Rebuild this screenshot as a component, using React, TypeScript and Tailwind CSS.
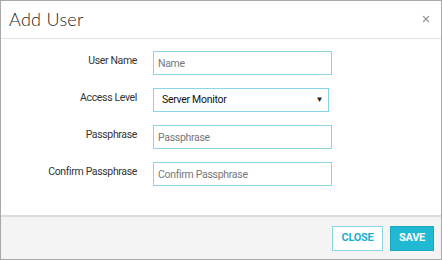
import { X } from "lucide-react"

const fields = [
  { label: "User Name", placeholder: "Name" },
  { label: "Access Level", select: "Server Monitor" },
  { label: "Passphrase", placeholder: "Passphrase" },
  { label: "Confirm Passphrase", placeholder: "Confirm Passphrase" },
]

export default function App() {
  return (
    <div className="w-[442px] h-[260px] bg-white border border-[#a8a8a8] flex flex-col font-['Roboto',Arial,sans-serif]">
      {/* header */}
      <div className="h-[38px] shrink-0 flex items-center justify-between pl-[8px] pr-[10px] border-b border-[#e3e3e3]">
        <h1 className="text-[18px] font-light text-[#222] font-['Lato',sans-serif] tracking-[0.3px]">Add User</h1>
        <X className="w-[10px] h-[10px] text-[#9a9a9a] -mt-[2px]" strokeWidth={3} />
      </div>

      {/* body */}
      <div className="flex-1 flex flex-col gap-[13px] pt-[12px]">
        {fields.map((f, i) => (
          <div key={i} className="flex items-center">
            <label className="w-[136px] text-right text-[10.5px] tracking-[-0.35px] text-[#333] -mt-[4px]">{f.label}</label>
            {f.select ? (
              <div className="ml-[16px] w-[176px] h-[24px] border border-[#8ad6e4] flex items-center justify-between pl-[8px] pr-[5px] text-[10.5px] tracking-[-0.3px] text-[#111]">
                <span>{f.select}</span>
                <span className="text-[8px] text-[#222]">▼</span>
              </div>
            ) : (
              <input
                placeholder={f.placeholder}
                className="ml-[16px] w-[179px] h-[24px] border border-[#8ad6e4] px-[4px] text-[10.5px] tracking-[-0.3px] text-[#333] placeholder:text-[#777] outline-none"
              />
            )}
          </div>
        ))}
      </div>

      {/* footer */}
      <div className="h-[44px] shrink-0 bg-[#f4f4f4] border-t-2 border-[#dcdcdc] flex items-center justify-end gap-[7px] pr-[7px]">
        <button className="w-[51px] h-[25px] bg-white border border-[#8ad6e4] text-[#1eaecb] text-[11px] font-bold tracking-[-0.3px]">CLOSE</button>
        <button className="w-[44px] h-[25px] bg-[#20b9d4] border border-[#1aa9c3] text-white text-[11px] font-bold tracking-[-0.3px]">SAVE</button>
      </div>
    </div>
  )
}
